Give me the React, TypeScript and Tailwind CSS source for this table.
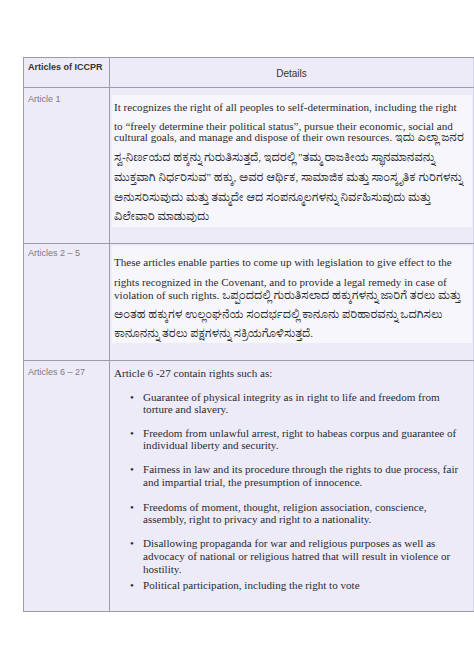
import React from 'react';

const serif = "font-['Liberation_Serif','Noto_Serif_Kannada','Noto_Sans_Kannada',serif] text-[11.1px] text-[#2a2a30] whitespace-nowrap";
const sans = "font-['Liberation_Sans',Arial,sans-serif]";

const rights: string[][] = [
    ['Guarantee of physical integrity as in right to life and freedom from', 'torture and slavery.'],
    ['Freedom from unlawful arrest, right to habeas corpus and guarantee of', 'individual liberty and security.'],
    ['Fairness in law and its procedure through the rights to due process, fair', 'and impartial trial,  the presumption of innocence.'],
    ['Freedoms of moment, thought, religion association, conscience,', 'assembly, right to privacy and right to a nationality.'],
    ['Disallowing propaganda for war and religious purposes as well as', 'advocacy of national or religious hatred that will result in violence or', 'hostility.'],
    ['Political participation, including the right to vote'],
];

const itemGaps = ['mt-[12px]', 'mt-[12px]', 'mt-[12px]', 'mt-[13px]', 'mt-[12px]', 'mt-[3px]'];
const itemLeading = ['leading-[12px]', 'leading-[12px]', 'leading-[12.5px]', 'leading-[12px]', 'leading-[13px]', 'leading-[12px]'];

const App: React.FC = () => {
    return (
        <div className="min-h-[669px] bg-white pt-[57px] pl-[23px]">
            <div className="w-[451px] border-l border-t border-[#9d9daa] bg-[#eeebf9]">
                {/* Header */}
                <div className="grid grid-cols-[86px_1fr] border-b border-[#9d9daa]">
                    <div className={`h-[29px] border-r border-[#9d9daa] pl-[4px] pt-[3px] text-[9px] leading-[12px] font-semibold text-[#333] ${sans}`}>
                        Articles of ICCPR
                    </div>
                    <div className={`flex h-[29px] items-center justify-center border-r border-[#d4d2e6] pt-[1px] text-[10px] text-[#333] ${sans}`}>
                        Details
                    </div>
                </div>

                {/* Article 1 */}
                <div className="grid grid-cols-[86px_1fr] border-b border-[#9d9daa]">
                    <div className={`h-[155px] border-r border-[#9d9daa] pl-[4px] pt-[5px] text-[9px] leading-[12px] text-[#7a7a80] ${sans}`}>
                        Article 1
                    </div>
                    <div className="border-r border-[#d4d2e6] pl-[2px] pt-[7px]">
                        <div className={`w-[360px] bg-[#f7f7fb] pb-[5px] pl-[2px] pt-[6px] leading-[12px] ${serif}`}>
                            <div>It recognizes the right of all peoples to self-determination, including the right</div>
                            <div className="mt-[7px]">to “freely determine their political status”, pursue their economic, social and</div>
                            <div className="-mt-px">cultural goals, and manage and dispose of their own resources. ಇದು ಎಲ್ಲಾ ಜನರ</div>
                            <div className="mt-[8px]">ಸ್ವ-ನಿರ್ಣಯದ ಹಕ್ಕನ್ನು ಗುರುತಿಸುತ್ತದೆ, ಇದರಲ್ಲಿ "ತಮ್ಮ ರಾಜಕೀಯ ಸ್ಥಾನಮಾನವನ್ನು</div>
                            <div className="mt-[8px]">ಮುಕ್ತವಾಗಿ ನಿರ್ಧರಿಸುವ" ಹಕ್ಕು, ಅವರ ಆರ್ಥಿಕ, ಸಾಮಾಜಿಕ ಮತ್ತು ಸಾಂಸ್ಕೃತಿಕ ಗುರಿಗಳನ್ನು</div>
                            <div className="mt-[8px]">ಅನುಸರಿಸುವುದು ಮತ್ತು ತಮ್ಮದೇ ಆದ ಸಂಪನ್ಮೂಲಗಳನ್ನು ನಿರ್ವಹಿಸುವುದು ಮತ್ತು</div>
                            <div className="mt-[7px]">ವಿಲೇವಾರಿ ಮಾಡುವುದು</div>
                        </div>
                    </div>
                </div>

                {/* Articles 2 - 5 */}
                <div className="grid grid-cols-[86px_1fr] border-b border-[#9d9daa]">
                    <div className={`h-[116px] border-r border-[#9d9daa] pl-[4px] pt-[3px] text-[9px] leading-[12px] text-[#7a7a80] ${sans}`}>
                        Articles 2 – 5
                    </div>
                    <div className="border-r border-[#d4d2e6] pl-[2px] pt-[2px]">
                        <div className={`w-[360px] bg-[#f7f7fb] pb-[4px] pl-[2px] pt-[10px] leading-[12px] ${serif}`}>
                            <div>These articles enable parties to come up with legislation to give effect to the</div>
                            <div className="mt-[8px]">rights recognized in the Covenant, and to provide a legal remedy in case of</div>
                            <div className="mt-[1px]">violation of such rights. ಒಪ್ಪಂದದಲ್ಲಿ ಗುರುತಿಸಲಾದ ಹಕ್ಕುಗಳನ್ನು ಜಾರಿಗೆ ತರಲು ಮತ್ತು</div>
                            <div className="mt-[7px]">ಅಂತಹ ಹಕ್ಕುಗಳ ಉಲ್ಲಂಘನೆಯ ಸಂದರ್ಭದಲ್ಲಿ ಕಾನೂನು ಪರಿಹಾರವನ್ನು ಒದಗಿಸಲು</div>
                            <div className="mt-[7px]">ಕಾನೂನನ್ನು ತರಲು ಪಕ್ಷಗಳನ್ನು ಸಕ್ರಿಯಗೊಳಿಸುತ್ತದೆ.</div>
                        </div>
                    </div>
                </div>

                {/* Articles 6 - 27 */}
                <div className="grid grid-cols-[86px_1fr] border-b border-[#9d9daa]">
                    <div className={`h-[250px] border-r border-[#9d9daa] pl-[4px] pt-[5px] text-[9px] leading-[12px] text-[#7a7a80] ${sans}`}>
                        Articles 6 – 27
                    </div>
                    <div className={`border-r border-[#d4d2e6] pl-[4px] pt-[6px] leading-[12px] ${serif}`}>
                        <div>Article 6 -27 contain rights such as:</div>
                        {rights.map((lines, i) => (
                            <div key={i} className={`flex ${itemGaps[i]} ${itemLeading[i]}`}>
                                <span className="ml-[16px] w-[13px]">•</span>
                                <div>
                                    {lines.map((line) => (
                                        <div key={line}>{line}</div>
                                    ))}
                                </div>
                            </div>
                        ))}
                    </div>
                </div>
            </div>
        </div>
    );
};

export default App;
